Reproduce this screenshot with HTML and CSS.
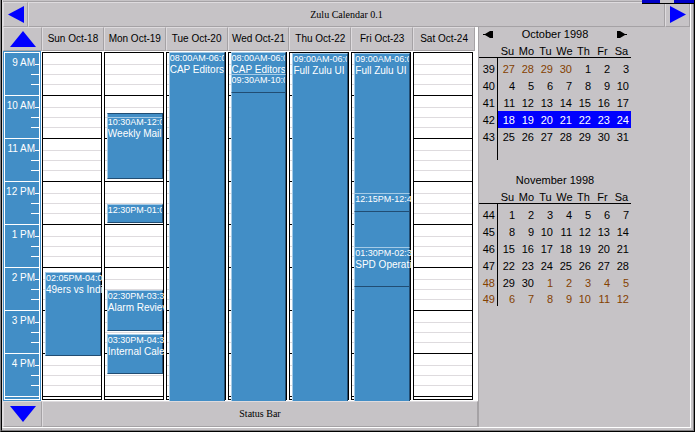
FILE: index.html
```html
<!DOCTYPE html>
<html lang="en">
<head>
<meta charset="utf-8">
<title>Zulu Calendar 0.1</title>
<link rel="stylesheet" href="styles.css">
</head>
<body>
<div class="window">
  <div class="frame">
  <div class="menu-edge"></div>
  <header class="toolbar">
    <button class="nav" aria-label="Previous week"><svg width="16" height="17" viewBox="0 0 16 17"><path d="M0 8.5 16 0v17z"/></svg></button>
    <h1 class="panel title">Zulu Calendar 0.1</h1>
    <button class="nav" aria-label="Next week"><svg width="16" height="17" viewBox="0 0 16 17"><path d="M16 8.5 0 0v17z"/></svg></button>
  </header>
  <div class="content">
    <main class="week">
      <div class="row heads">
        <button class="nav" aria-label="Earlier"><svg width="26" height="16" viewBox="0 0 26 16"><path d="M13 0 26 16H0z"/></svg></button>
        <div class="panel">Sun Oct-18</div><div class="panel">Mon Oct-19</div><div class="panel">Tue Oct-20</div><div class="panel">Wed Oct-21</div><div class="panel">Thu Oct-22</div><div class="panel">Fri Oct-23</div><div class="panel">Sat Oct-24</div>
      </div>
      <div class="row body">
        <div class="hours">
          <div class="hour">9 AM</div><div class="hour">10 AM</div><div class="hour">11 AM</div><div class="hour">12 PM</div><div class="hour">1 PM</div><div class="hour">2 PM</div><div class="hour">3 PM</div><div class="hour">4 PM</div><div class="rest"></div>
        </div>
        <div class="day"><div class="slots"></div>
          <div class="event spill" style="--top:221px;--len:84px"><time>02:05PM-04:0</time><p>49ers vs Indi</p></div>
        </div>
        <div class="day"><div class="slots"></div>
          <div class="event late" style="--top:62px;--len:66px"><time>10:30AM-12:0</time><p>Weekly Mail</p></div>
          <div class="event" style="--top:153px;--len:19px"><time>12:30PM-01:0</time></div>
          <div class="event spill" style="--top:239px;--len:41px"><time>02:30PM-03:3</time><p>Alarm Reviev</p></div>
          <div class="event spill" style="--top:283px;--len:40px"><time>03:30PM-04:3</time><p>Internal Cale</p></div>
        </div>
        <div class="day"><div class="slots"></div>
          <div class="event" style="--top:1px;--len:350px"><time>08:00AM-06:0</time><p>CAP Editors</p></div>
        </div>
        <div class="day"><div class="slots"></div>
          <div class="event" style="--top:1px;--len:350px"><time>08:00AM-06:0</time><p>CAP Editors</p></div>
          <div class="event" style="--top:23px;--len:19px"><time>09:30AM-10:0</time></div>
        </div>
        <div class="day"><div class="slots"></div>
          <div class="event" style="--top:2px;--len:349px"><time>09:00AM-06:0</time><p>Full Zulu UI</p></div>
        </div>
        <div class="day"><div class="slots"></div>
          <div class="event" style="--top:2px;--len:349px"><time>09:00AM-06:0</time><p>Full Zulu UI</p></div>
          <div class="event spill" style="--top:142px;--len:19px"><time>12:15PM-12:4</time></div>
          <div class="event spill" style="--top:196px;--len:40px"><time>01:30PM-02:3</time><p>SPD Operati</p></div>
        </div>
        <div class="day"><div class="slots"></div></div>
      </div>
      <footer class="status">
        <button class="nav" aria-label="Later"><svg width="26" height="16" viewBox="0 0 26 16"><path d="M13 16 26 0H0z"/></svg></button>
        <div class="panel title">Status Bar</div>
      </footer>
    </main>
    <aside class="side">
      <section class="month">
        <div class="month-head">
          <button class="step" aria-label="Previous month"><svg width="10" height="7" viewBox="0 0 10 7"><path d="M0 3h2l5-3h3v7H7L2 4H0z"/></svg></button>
          <h2>October 1998</h2>
          <button class="step" aria-label="Next month"><svg width="10" height="7" viewBox="0 0 10 7"><path d="M10 3H8L3 0H0v7h3l5-3h2z"/></svg></button>
        </div>
        <table>
          <thead><tr><td></td><th>Su</th><th>Mo</th><th>Tu</th><th>We</th><th>Th</th><th>Fr</th><th>Sa</th></tr></thead>
          <tbody>
            <tr><th>39</th><td class="other">27</td><td class="other">28</td><td class="other">29</td><td class="other">30</td><td>1</td><td>2</td><td>3</td></tr>
            <tr><th>40</th><td>4</td><td>5</td><td>6</td><td>7</td><td>8</td><td>9</td><td>10</td></tr>
            <tr><th>41</th><td>11</td><td>12</td><td>13</td><td>14</td><td>15</td><td>16</td><td>17</td></tr>
            <tr class="current"><th>42</th><td>18</td><td>19</td><td>20</td><td>21</td><td>22</td><td>23</td><td>24</td></tr>
            <tr><th>43</th><td>25</td><td>26</td><td>27</td><td>28</td><td>29</td><td>30</td><td>31</td></tr>
            <tr><th></th><td></td><td></td><td></td><td></td><td></td><td></td><td></td></tr>
          </tbody>
        </table>
      </section>
      <section class="month">
        <div class="month-head"><h2>November 1998</h2></div>
        <table>
          <thead><tr><td></td><th>Su</th><th>Mo</th><th>Tu</th><th>We</th><th>Th</th><th>Fr</th><th>Sa</th></tr></thead>
          <tbody>
            <tr><th>44</th><td>1</td><td>2</td><td>3</td><td>4</td><td>5</td><td>6</td><td>7</td></tr>
            <tr><th>45</th><td>8</td><td>9</td><td>10</td><td>11</td><td>12</td><td>13</td><td>14</td></tr>
            <tr><th>46</th><td>15</td><td>16</td><td>17</td><td>18</td><td>19</td><td>20</td><td>21</td></tr>
            <tr><th>47</th><td>22</td><td>23</td><td>24</td><td>25</td><td>26</td><td>27</td><td>28</td></tr>
            <tr><th class="other">48</th><td>29</td><td>30</td><td class="other">1</td><td class="other">2</td><td class="other">3</td><td class="other">4</td><td class="other">5</td></tr>
            <tr><th class="other">49</th><td class="other">6</td><td class="other">7</td><td class="other">8</td><td class="other">9</td><td class="other">10</td><td class="other">11</td><td class="other">12</td></tr>
          </tbody>
        </table>
      </section>
    </aside>
  </div>
  </div>
  <div class="menu-tab"></div>
</div>
</body>
</html>
```
FILE: styles.css
```css
* { box-sizing: border-box; }

:root {
  --gray: #c6c3c6;
  --dark: #a5a2a5;
  --light: #dedbde;
  --blue: #428ec6;
  --pale: #a5cbe7;
  --navy: #214d73;
}

body {
  margin: 0;
  min-height: 100vh;
  display: flex;
  border: solid #000;
  border-width: 0 1px 1px 0;
  border-left: 1px solid #848284;
  font: 10px/12px "Liberation Sans", Arial, sans-serif;
  color: #000;
}

h1, h2, p { margin: 0; font: inherit; }

.window {
  position: relative;
  flex: 1;
  display: flex;
  padding: 0 2px 2px 0;
  border-left: 1px solid #000;
  border-right: 1px solid #848284;
  border-bottom: 1px solid #848284;
  background: var(--gray);
}

.frame {
  flex: 1;
  display: flex;
  flex-direction: column;
  border-left: 1px solid var(--light);
  border-right: 1px solid #fff;
  border-bottom: 1px solid #fff;
}

.menu-edge {
  height: 2px;
  border-bottom: 1px solid var(--dark);
}

.menu-tab {
  position: absolute;
  top: 0;
  right: -1px;
  width: 52px;
  height: 3px;
  border: solid #0000c6;
  border-width: 0 20px 0 18px;
  background: var(--gray);
  box-shadow: 0 1px 0 #000;
}

button {
  margin: 0;
  padding: 0;
  border: 0;
  font: inherit;
  color: inherit;
  background: none;
}

svg { display: block; }

.nav, .panel {
  display: flex;
  align-items: center;
  justify-content: center;
  background: var(--gray);
  border: 1px solid;
  border-color: var(--light) var(--dark) var(--dark) var(--light);
  white-space: nowrap;
}

.nav svg { fill: #00f; }

.panel.title { font-family: "Liberation Serif", "Times New Roman", serif; }

.toolbar {
  display: grid;
  grid-template-columns: 25px 1fr 25px;
  grid-template-rows: 25px;
}

.content {
  flex: 1;
  display: grid;
  grid-template-columns: 1fr 211px;
}

.week {
  background: #fff;
  border-right: 1px solid var(--dark);
}

.row {
  display: grid;
  grid-template-columns: 39px repeat(7, 1fr);
  padding-right: 3px;
}

.heads { height: 24px; }

.body { height: 350px; }

.hours {
  display: flex;
  flex-direction: column;
  margin-right: 1px;
  border: 1px solid var(--blue);
  color: #fff;
  background: var(--blue);
}

.hour {
  height: 43px;
  padding: 4px 4px 0 0;
  text-align: right;
  white-space: nowrap;
  border: solid #fff;
  border-width: 1px 1px 0;
  background:
    linear-gradient(#fff, #fff) right 11px / 4px 1px no-repeat,
    linear-gradient(#fff, #fff) right 21px / 8px 1px no-repeat,
    linear-gradient(#fff, #fff) right 31px / 8px 1px no-repeat;
}

.rest { flex: 1; border: 1px solid #fff; }

.day {
  position: relative;
  padding: 1px 2px 1px 0;
  overflow: hidden;
}

.slots {
  height: 348px;
  border: 1px solid #000;
  background: repeating-linear-gradient(
    #fff 0 11px, #dedbde 11px 12px,
    #fff 12px 21px, #dedbde 21px 22px,
    #fff 22px 31px, #dedbde 31px 32px,
    #fff 32px 42px, #000 42px 43px);
}

.event {
  position: absolute;
  top: var(--top);
  left: 3px;
  right: 3px;
  height: var(--len);
  overflow: hidden;
  border: 1px solid;
  border-color: var(--pale) var(--navy) var(--navy) var(--pale);
  background: var(--blue);
  color: #fff;
  line-height: 11px;
  white-space: nowrap;
}

.event time { display: block; font-size: 9px; }

.event.spill { overflow: visible; }

.late {
  padding-top: 3px;
  border-top-color: var(--navy);
  background: linear-gradient(var(--pale), var(--pale)) 0 3px / 100% 1px no-repeat var(--blue);
}

.status {
  display: grid;
  grid-template-columns: 39px 1fr;
  grid-template-rows: 26px;
}

.side { font-size: 11px; }

.month { width: 152px; }

.month + .month { padding-top: 13px; }

.month-head {
  height: 14px;
  display: flex;
  justify-content: space-between;
  align-items: center;
  padding: 0 4px;
}

.month-head h2 { flex: 1; text-align: center; }

table { border-collapse: separate; border-spacing: 0; table-layout: fixed; width: 152px; }

td, th { width: 19px; height: 17px; padding: 0 2px 0 0; font-weight: normal; text-align: right; }

thead td, thead th {
  height: 17px;
  padding: 0;
  text-align: center;
  vertical-align: bottom;
  border-bottom: 1px solid #000;
}

tbody tr:first-child > * { height: 19px; padding-top: 2px; }

tbody tr:last-child > * { height: 15px; }

tbody th { border-right: 1px solid #000; }

.other { color: #844100; }

tbody th.other { border-right-color: #000; }

.current td { background: #00f; color: #fff; }
```
